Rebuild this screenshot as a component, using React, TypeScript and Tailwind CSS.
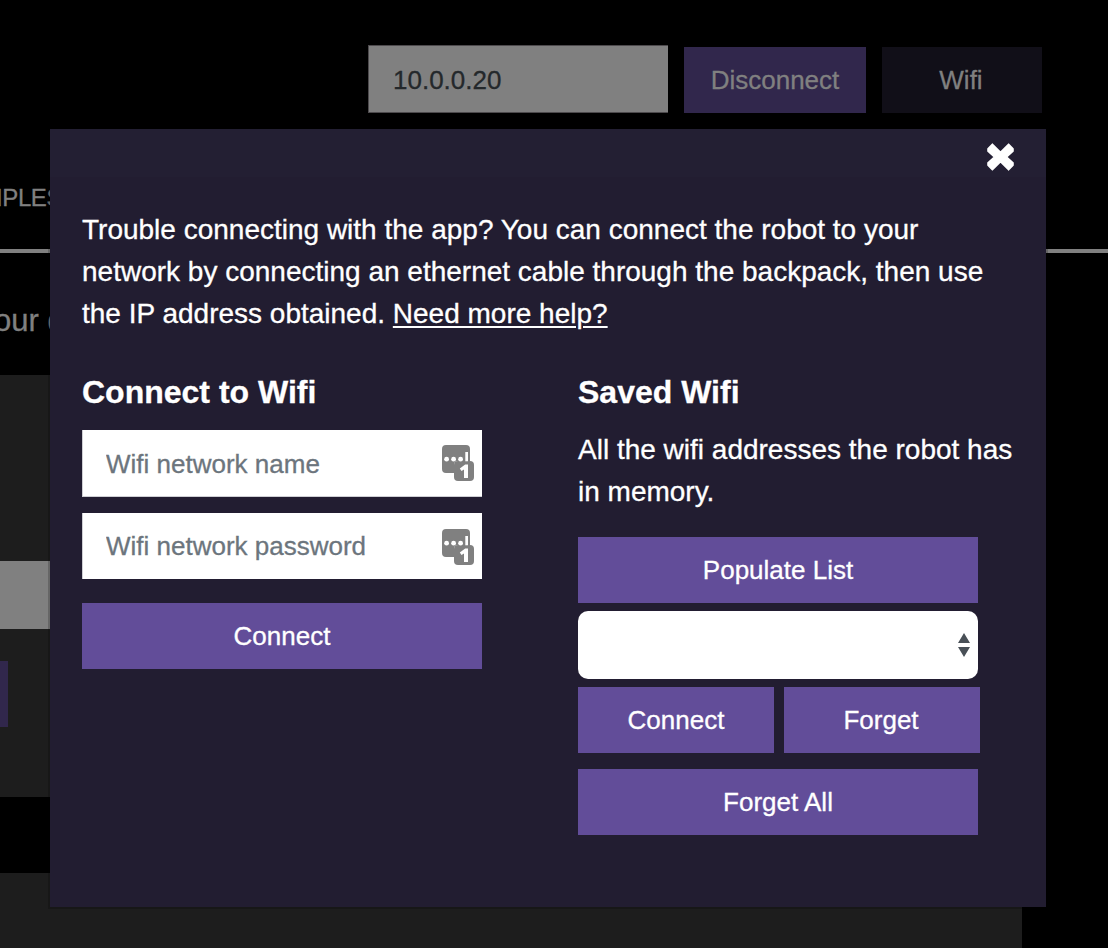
import type { ReactNode } from "react";

function Button({ children, className = "w-full" }: { children: ReactNode; className?: string }) {
  return (
    <button
      className={`block h-[66px] shrink-0 bg-[#624d99] text-center text-[26px] leading-[66px] text-white ${className}`}
    >
      {children}
    </button>
  );
}

function PasswordIcon({ className }: { className: string }) {
  return (
    <svg className={className} width="32" height="36" viewBox="0 0 32 36" aria-hidden="true">
      <path
        fill="#808080"
        d="M4 0h20a4 4 0 0 1 4 4v12h-1V7h-3v9h-8a4 4 0 0 0-4 4v8H4a4 4 0 0 1-4-4V4a4 4 0 0 1 4-4z"
      />
      <rect x="12" y="16" width="20" height="20" rx="4" fill="#808080" />
      <circle cx="4.6" cy="14.2" r="2.4" fill="#fff" />
      <circle cx="11.6" cy="14.2" r="2.4" fill="#fff" />
      <circle cx="18.6" cy="14.2" r="2.4" fill="#fff" />
      <rect x="23.3" y="7" width="2.6" height="9.3" fill="#fff" />
      <path d="M26 7h2v9h-2z" fill="#808080" />
      <path d="M17.8 23.4 23.2 19.4H26V33h-4V24.4l-2.5 1.7z" fill="#fff" />
    </svg>
  );
}

function Field({
  placeholder,
  className,
  inputClassName,
  iconClassName,
}: {
  placeholder: string;
  className: string;
  inputClassName: string;
  iconClassName: string;
}) {
  return (
    <label className={`flex w-[400px] items-start border-l border-[#cfcfd4] bg-white pr-2 pl-[23px] ${className}`}>
      <input
        placeholder={placeholder}
        className={`h-10 min-w-0 flex-1 bg-transparent text-[26px] text-[#212529] outline-none placeholder:text-[#6c757d] ${inputClassName}`}
      />
      <PasswordIcon className={iconClassName} />
    </label>
  );
}

function Dialog() {
  return (
    <section className="absolute top-[129px] left-[50px] h-[778px] w-[996px] bg-[#221d31] text-white shadow-[0_0_0_2px_rgba(0,0,0,0.2)]">
      <header className="flex h-12 justify-end bg-[#231f33] pt-[14px] pr-8">
        <button aria-label="Close" className="h-[28px] w-[27px]">
          <svg width="27" height="28" viewBox="0 0 27 28">
            <path
              fill="#fff"
              stroke="#fff"
              strokeWidth="1.6"
              strokeLinejoin="round"
              d="M5.4 1.2 13.5 9.2 21.6 1.2 26 5.8V8.2L19.6 14 26 19.8V22.2L21.6 26.8 13.5 18.8 5.4 26.8 1 22.2V19.8L7.4 14 1 8.2V5.8z"
            />
          </svg>
        </button>
      </header>
      <div className="px-8 pt-8">
        <p className="text-[28px] leading-[42px] whitespace-nowrap">
          Trouble connecting with the app? You can connect the robot to your
          <br />
          network by connecting an ethernet cable through the backpack, then use
          <br />
          the IP address obtained. <a className="underline decoration-2 underline-offset-[3px]">Need more help?</a>
        </p>
        <div className="mt-[38px] flex gap-24">
          <div className="w-[400px]">
            <h2 className="text-[32px] leading-[38px] font-bold">Connect to Wifi</h2>
            <Field
              placeholder="Wifi network name"
              className="mt-[19px] h-[67px] border-b"
              inputClassName="mt-[14px]"
              iconClassName="mt-[15px]"
            />
            <Field
              placeholder="Wifi network password"
              className="mt-4 h-[66px]"
              inputClassName="mt-[13px]"
              iconClassName="mt-4"
            />
            <Button className="mt-6 w-full">Connect</Button>
          </div>
          <div className="w-[400px]">
            <h2 className="text-[32px] leading-[38px] font-bold">Saved Wifi</h2>
            <p className="mt-[18px] text-[28px] leading-[42px] whitespace-nowrap">
              All the wifi addresses the robot has
              <br />
              in memory.
            </p>
            <Button className="mt-6 w-full">Populate List</Button>
            <div className="mt-2 flex h-[68px] items-center justify-end rounded-[10px] bg-white pr-2">
              <svg width="12" height="24" viewBox="0 0 12 24" aria-hidden="true">
                <path fill="#495057" d="M6 0l6 10H0zM0 14h12L6 24z" />
              </svg>
            </div>
            <div className="mt-2 flex w-[402px] gap-[10px]">
              <Button className="w-[196px]">Connect</Button>
              <Button className="w-[196px] pr-[2px]">Forget</Button>
            </div>
            <Button className="mt-4 w-full">Forget All</Button>
          </div>
        </div>
      </div>
    </section>
  );
}

export default function App() {
  return (
    <main className="relative h-[948px] w-[1108px] overflow-hidden bg-black font-['Liberation_Sans',Arial,sans-serif] text-[#808080] [-webkit-text-stroke:0.3px_currentColor]">
      <div className="flex h-[113px] items-end justify-end gap-4 pr-[66px]">
        <input
          defaultValue="10.0.0.20"
          className="h-[68px] w-[300px] border border-r-0 border-[#4d4a4d] bg-[#808080] px-6 pt-[2px] text-[26px] text-[#24282b] outline-none"
        />
        <button className="h-[66px] w-[182px] bg-[#31274c] text-[26px]">Disconnect</button>
        <button className="h-[66px] w-[160px] bg-[#110f18] pr-[2px] text-[26px]">Wifi</button>
      </div>
      <nav className="flex h-[140px] items-end border-b-4 border-[#808080] pb-[34px]">
        <span className="-ml-[4px] text-[24px] leading-[34px] tracking-[-0.4px]">IPLES</span>
      </nav>
      <p className="-ml-[6px] h-[122px] pt-[47px] text-[31px] leading-[42px]">our d</p>
      <div className="h-[422px] w-[1022px] bg-[#1d1d1d] pt-[186px]">
        <div className="h-[68px] w-[400px] bg-[#808080]" />
        <div className="mt-8 h-[66px] w-2 bg-[#31274c]" />
      </div>
      <div className="mt-[76px] h-[75px] w-[1022px] bg-[#1d1d1d]" />
      <Dialog />
    </main>
  );
}
